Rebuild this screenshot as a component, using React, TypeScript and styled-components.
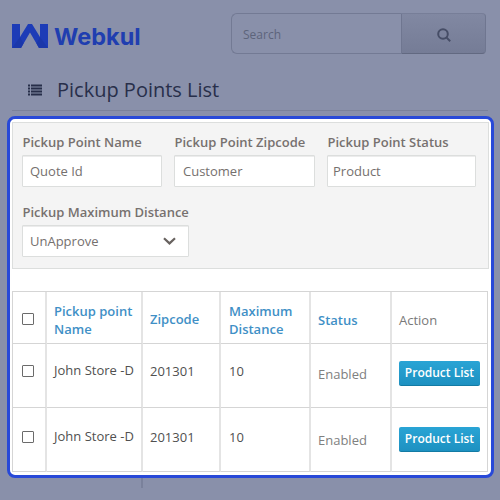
import React from "react";
import styled, { createGlobalStyle } from "styled-components";

const GlobalStyle = createGlobalStyle`
  *, *::before, *::after { box-sizing: border-box; }
  html, body { margin: 0; padding: 0; }
  body { background: #8990aa; font-family: "Open Sans", sans-serif; font-size: 13px; overflow: hidden; }
`;

const Page = styled.div`
  width: 500px;
  height: 500px;
  background: #8990aa;
  overflow: hidden;
`;

const TopBar = styled.header`
  display: flex;
  justify-content: space-between;
  padding: 13px 14px 0 12px;
  height: 68px;
`;

const Brand = styled.div`
  display: flex;
  align-items: center;
  gap: 6px;
  height: 46px;
  color: #203eb0;
  font: 700 23.5px/28px Inter, sans-serif;
`;

const Wordmark = styled.span`
  padding-top: 2px;
`;

const SearchGroup = styled.div`
  display: flex;
  width: 255px;
  height: 41px;
`;

const SearchBox = styled.div`
  width: 170px;
  padding-left: 11px;
  border: 1px solid #737a94;
  border-right: 0;
  border-radius: 6px 0 0 6px;
  color: #5d647b;
  font-size: 12px;
  line-height: 41px;
`;

const SearchButton = styled.button`
  display: flex;
  align-items: center;
  justify-content: center;
  flex: 1;
  padding: 2px 0 0;
  border: 1px solid #6f7690;
  border-top-color: #777e98;
  border-bottom-color: #626981;
  border-radius: 0 4px 4px 0;
  background: linear-gradient(#8188a2, #757c96);
`;

const TitleBar = styled.div`
  display: flex;
  align-items: center;
  gap: 15px;
  height: 43px;
  margin: 0 12px;
  padding: 1px 0 0 16px;
  border-bottom: 1px solid #7a819b;
`;

const Title = styled.h1`
  margin: 0;
  color: #282f4a;
  font-size: 20px;
  font-weight: 400;
  line-height: 30px;
`;

const Highlight = styled.main`
  width: 487px;
  height: 362px;
  margin: 5px 0 0 7px;
  padding: 3px 2px 0;
  border: 3px solid #2849d8;
  border-radius: 8px;
  background: #fff;
`;

const Filters = styled.section`
  display: grid;
  grid-template-columns: 140px 141px 149px;
  column-gap: 12px;
  align-content: start;
  row-gap: 15px;
  height: 147px;
  padding: 9px 9px 0;
  border: 1px solid #dcdedd;
  background: #f4f4f4;
`;

const Field = styled.div<{ $width?: number }>`
  width: ${(p) => (p.$width ? `${p.$width}px` : "100%")};
`;

const Label = styled.label`
  display: block;
  height: 23px;
  padding-left: 0.5px;
  color: #77716f;
  font-weight: 600;
  line-height: 20px;
  white-space: nowrap;
`;

const Control = styled.div<{ $inset?: number }>`
  display: flex;
  align-items: center;
  justify-content: space-between;
  height: 32px;
  padding: 0 12px 0 ${(p) => p.$inset ?? 7}px;
  border: 1px solid #dcdedd;
  border-radius: 1px;
  box-shadow: inset 0 1px 0 #ececec;
  background: #fff;
  color: #75706e;
  line-height: 30px;
`;

const Table = styled.table`
  width: 476px;
  margin-top: 22px;
  border-collapse: separate;
  border-spacing: 0;
  table-layout: fixed;
  border: 1px solid #d5d5d5;
  border-width: 1px 1px 0;
`;

const Row = styled.tr<{ $height: number }>`
  height: ${(p) => p.$height}px;
`;

const Cell = styled.td<{ $shift?: number; $inset?: number }>`
  padding: ${(p) => Math.max(0, p.$shift ?? 0)}px 0 ${(p) => Math.max(0, -(p.$shift ?? 0))}px ${(p) => p.$inset ?? 7}px;
  border-right: 2px solid #e4e4e4;
  border-bottom: 1px solid #d5d5d5;
  color: #505050;
  line-height: 18px;
  text-align: left;
  vertical-align: middle;
  white-space: nowrap;
  &:first-child { padding-left: 9px; }
  &:last-child { border-right: 0; }
`;

const HeadCell = styled(Cell).attrs({ as: "th" })`
  color: #3f90c6;
  font-weight: 600;
`;

const PlainHead = styled(HeadCell)`
  color: #797979;
  font-weight: 400;
`;

const MutedCell = styled(Cell)`
  color: #808080;
`;

const CheckBox = styled.span`
  display: block;
  width: 12px;
  height: 12px;
  border: 1px solid #6b6b6b;
  border-radius: 1px;
`;

const ProductButton = styled.button`
  display: block;
  width: 81px;
  height: 25px;
  padding: 0 0 1px;
  border: 0;
  border-bottom: 1px solid #137ba4;
  border-radius: 2px;
  background: linear-gradient(#29a4d5, #1d91c1);
  color: #fff;
  font: 600 12px/22px "Open Sans", sans-serif;
  white-space: nowrap;
`;

const ColumnTail = styled.div`
  width: 2px;
  height: 10px;
  margin-left: 141px;
  background: #7a819b;
`;

const Logo = () => (
  <svg width="36" height="24" viewBox="0 0 36 24">
    <path d="M0 0H8V13L16 0H20L28 13V0H36V24H27L18 8.5L9 24H0Z" fill="#1d3cb7" />
    <path d="M0 24L8 13L11.5 19.5L9 24ZM36 24L28 13L24.5 19.5L27 24Z" fill="#1a37aa" />
  </svg>
);

const SearchIcon = () => (
  <svg width="14" height="14" viewBox="0 0 14 14" fill="none" stroke="#464d66" strokeWidth="2">
    <circle cx="6" cy="6" r="4.8" />
    <path d="M9.4 9.4L13.2 13.2" />
  </svg>
);

const ListIcon = () => (
  <svg width="14" height="12" viewBox="0 0 14 12" fill="#272e49">
    {[0, 3, 6, 9].map((y) => (
      <React.Fragment key={y}>
        <rect x="0" y={y + 0.5} width="2" height="2" />
        <rect x="3" y={y + 0.5} width="11" height="2" />
      </React.Fragment>
    ))}
  </svg>
);

const Chevron = () => (
  <svg width="13" height="8" viewBox="0 0 13 8" fill="none" stroke="#68625f" strokeWidth="2.2">
    <path d="M1 1.2L6.5 6.4L12 1.2" />
  </svg>
);

const fields = [
  { label: "Pickup Point Name", value: "Quote Id", inset: 7 },
  { label: "Pickup Point Zipcode", value: "Customer", inset: 8 },
  { label: "Pickup Point Status", value: "Product", inset: 5 },
];

const stores = [
  { id: 1, name: "John Store -D", zip: "201301", distance: 10, status: "Enabled" },
  { id: 2, name: "John Store -D", zip: "201301", distance: 10, status: "Enabled" },
];

export default function App() {
  return (
    <Page>
      <GlobalStyle />
      <TopBar>
        <Brand>
          <Logo />
          <Wordmark>Webkul</Wordmark>
        </Brand>
        <SearchGroup>
          <SearchBox>Search</SearchBox>
          <SearchButton aria-label="Search">
            <SearchIcon />
          </SearchButton>
        </SearchGroup>
      </TopBar>
      <TitleBar>
        <ListIcon />
        <Title>Pickup Points List</Title>
      </TitleBar>
      <Highlight>
        <Filters>
          {fields.map((f) => (
            <Field key={f.label}>
              <Label>{f.label}</Label>
              <Control $inset={f.inset}>{f.value}</Control>
            </Field>
          ))}
          <Field $width={167}>
            <Label>Pickup Maximum Distance</Label>
            <Control>
              UnApprove
              <Chevron />
            </Control>
          </Field>
        </Filters>
        <Table>
          <colgroup>
            <col width="34" />
            <col width="96" />
            <col width="78" />
            <col width="90" />
            <col width="81" />
            <col />
          </colgroup>
          <thead>
            <Row $height={52}>
              <HeadCell $shift={3}><CheckBox /></HeadCell>
              <HeadCell $shift={5}>Pickup point<br />Name</HeadCell>
              <HeadCell $shift={2}>Zipcode</HeadCell>
              <HeadCell $shift={5} $inset={8}>Maximum<br />Distance</HeadCell>
              <HeadCell $shift={4}>Status</HeadCell>
              <PlainHead $shift={4}>Action</PlainHead>
            </Row>
          </thead>
          <tbody>
            {stores.map((s, i) => (
              <Row key={s.id} $height={64}>
                <Cell $shift={i ? -6 : -10}><CheckBox /></Cell>
                <Cell $shift={i ? -7 : -11}>{s.name}</Cell>
                <Cell $shift={i ? -5 : -9}>{s.zip}</Cell>
                <Cell $shift={i ? -5 : -9} $inset={8}>{s.distance}</Cell>
                <MutedCell $shift={i ? 1 : -3}>{s.status}</MutedCell>
                <Cell $shift={i ? 0 : -4}><ProductButton>Product List</ProductButton></Cell>
              </Row>
            ))}
          </tbody>
        </Table>
      </Highlight>
      <ColumnTail />
    </Page>
  );
}
